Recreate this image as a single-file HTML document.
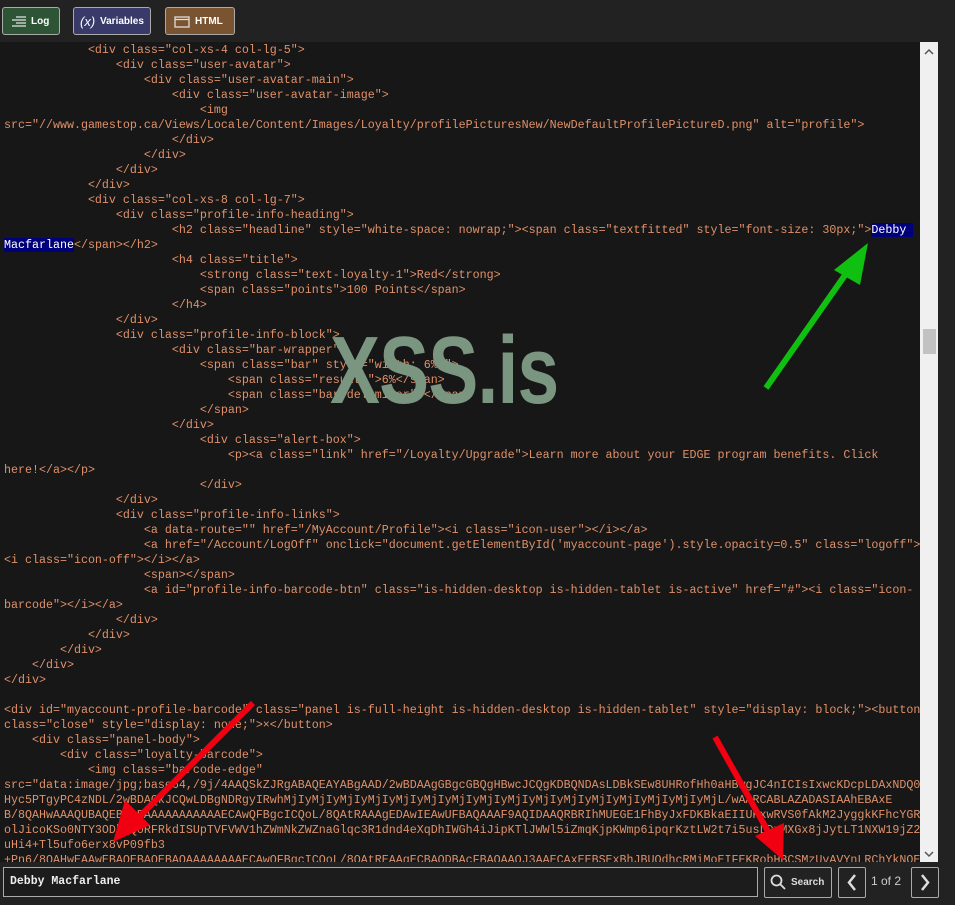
<!DOCTYPE html>
<html><head><meta charset="utf-8"><style>
html,body{margin:0;padding:0;background:#222;width:955px;height:905px;overflow:hidden;font-family:"Liberation Sans",sans-serif}
.top{position:absolute;left:0;top:0;width:955px;height:42px;background:#222}
.btn{position:absolute;top:7px;height:28px;border:1px solid #aaa;border-radius:3px;color:#fff;font-weight:bold;font-size:10px;line-height:28px;box-sizing:border-box}
.code{position:absolute;left:0;top:42px;width:920px;height:820px;background:#171717;overflow:hidden}
pre{margin:0;position:absolute;left:4px;top:1px;font-family:"Liberation Mono",monospace;font-size:11.67px;line-height:15px;color:#e0916a;white-space:pre}
.sel{background:#00007a;color:#fff}
.sb{position:absolute;left:920px;top:42px;width:18px;height:820px;background:#f0f0f0}
.wm{position:absolute;left:330px;top:274px;font-family:"Liberation Sans",sans-serif;font-weight:bold;font-size:96px;color:#7b9680;transform:scaleX(0.78);transform-origin:0 0;letter-spacing:-1px}
.bottom{position:absolute;left:0;top:862px;width:955px;height:43px;background:#222}
</style></head><body>
<div class="top">
<div class="btn" style="left:2px;width:58px;background:#2d5535;padding-left:10px">
<svg width="14" height="12" style="position:absolute;left:9px;top:8px" stroke="#ddd" stroke-width="1.3"><line x1="4" y1="1" x2="14" y2="1"/><line x1="0" y1="4" x2="14" y2="4"/><line x1="4" y1="7" x2="14" y2="7"/><line x1="0" y1="10" x2="14" y2="10"/></svg>
<span style="position:absolute;left:28px">Log</span></div>
<div class="btn" style="left:73px;width:78px;background:#3a3a6a"><span style="position:absolute;left:6px;font-style:italic;font-weight:normal;font-size:13px">(x)</span><span style="position:absolute;left:26px">Variables</span></div>
<div class="btn" style="left:165px;width:70px;background:#7a5430"><svg width="16" height="12" style="position:absolute;left:8px;top:8px" fill="none" stroke="#ddd" stroke-width="1.3"><rect x="1" y="1" width="14" height="10"/><line x1="1" y1="3.5" x2="15" y2="3.5"/></svg><span style="position:absolute;left:29px">HTML</span></div>
</div>
<div class="code"><pre>            &lt;div class="col-xs-4 col-lg-5"&gt;
                &lt;div class="user-avatar"&gt;
                    &lt;div class="user-avatar-main"&gt;
                        &lt;div class="user-avatar-image"&gt;
                            &lt;img
src="//www.gamestop.ca/Views/Locale/Content/Images/Loyalty/profilePicturesNew/NewDefaultProfilePictureD.png" alt="profile"&gt;
                        &lt;/div&gt;
                    &lt;/div&gt;
                &lt;/div&gt;
            &lt;/div&gt;
            &lt;div class="col-xs-8 col-lg-7"&gt;
                &lt;div class="profile-info-heading"&gt;
                        &lt;h2 class="headline" style="white-space: nowrap;"&gt;&lt;span class="textfitted" style="font-size: 30px;"&gt;<span class="sel">Debby </span>
<span class="sel">Macfarlane</span>&lt;/span&gt;&lt;/h2&gt;
                        &lt;h4 class="title"&gt;
                            &lt;strong class="text-loyalty-1"&gt;Red&lt;/strong&gt;
                            &lt;span class="points"&gt;100 Points&lt;/span&gt;
                        &lt;/h4&gt;
                &lt;/div&gt;
                &lt;div class="profile-info-block"&gt;
                        &lt;div class="bar-wrapper"&gt;
                            &lt;span class="bar" style="width: 6%;"&gt;
                                &lt;span class="result "&gt;6%&lt;/span&gt;
                                &lt;span class="bar-delimiter"&gt;&lt;/span&gt;
                            &lt;/span&gt;
                        &lt;/div&gt;
                            &lt;div class="alert-box"&gt;
                                &lt;p&gt;&lt;a class="link" href="/Loyalty/Upgrade"&gt;Learn more about your EDGE program benefits. Click
here!&lt;/a&gt;&lt;/p&gt;
                            &lt;/div&gt;
                &lt;/div&gt;
                &lt;div class="profile-info-links"&gt;
                    &lt;a data-route="" href="/MyAccount/Profile"&gt;&lt;i class="icon-user"&gt;&lt;/i&gt;&lt;/a&gt;
                    &lt;a href="/Account/LogOff" onclick="document.getElementById('myaccount-page').style.opacity=0.5" class="logoff"&gt;
&lt;i class="icon-off"&gt;&lt;/i&gt;&lt;/a&gt;
                    &lt;span&gt;&lt;/span&gt;
                    &lt;a id="profile-info-barcode-btn" class="is-hidden-desktop is-hidden-tablet is-active" href="#"&gt;&lt;i class="icon-
barcode"&gt;&lt;/i&gt;&lt;/a&gt;
                &lt;/div&gt;
            &lt;/div&gt;
        &lt;/div&gt;
    &lt;/div&gt;
&lt;/div&gt;

&lt;div id="myaccount-profile-barcode" class="panel is-full-height is-hidden-desktop is-hidden-tablet" style="display: block;"&gt;&lt;button
class="close" style="display: none;"&gt;×&lt;/button&gt;
    &lt;div class="panel-body"&gt;
        &lt;div class="loyalty-barcode"&gt;
            &lt;img class="barcode-edge"
src="data:image/jpg;base64,/9j/4AAQSkZJRgABAQEAYABgAAD/2wBDAAgGBgcGBQgHBwcJCQgKDBQNDAsLDBkSEw8UHRofHh0aHBwgJC4nICIsIxwcKDcpLDAxNDQ0
Hyc5PTgyPC4zNDL/2wBDAQkJCQwLDBgNDRgyIRwhMjIyMjIyMjIyMjIyMjIyMjIyMjIyMjIyMjIyMjIyMjIyMjIyMjIyMjIyMjIyMjL/wAARCABLAZADASIAAhEBAxE
B/8QAHwAAAQUBAQEBAQEAAAAAAAAAAAECAwQFBgcICQoL/8QAtRAAAgEDAwIEAwUFBAQAAAF9AQIDAAQRBRIhMUEGE1FhByJxFDKBkaEIIUKxwRVS0fAkM2JyggkKFhcYGR
olJicoKSo0NTY3ODk6Q0RFRkdISUpTVFVWV1hZWmNkZWZnaGlqc3R1dnd4eXqDhIWGh4iJipKTlJWWl5iZmqKjpKWmp6ipqrKztLW2t7i5usLDxMXGx8jJytLT1NXW19jZ2
uHi4+Tl5ufo6erx8vP09fb3
+Pn6/8QAHwEAAwEBAQEBAQEBAQAAAAAAAAECAwQFBgcICQoL/8QAtREAAgECBAQDBAcFBAQAAQJ3AAECAxEEBSExBhJBUQdhcRMiMoEIFEKRobHBCSMzUvAVYnLRChYkNOE</pre>
<div class="wm">XSS.is</div>
</div>
<div class="sb"><svg width="18" height="820" style="position:absolute;left:0;top:0"><path d="M5 12 L9 8 L13 12" fill="none" stroke="#555" stroke-width="1.5"/><rect x="3" y="287" width="13" height="25" fill="#c2c2c2"/><path d="M5 810 L9 814 L13 810" fill="none" stroke="#555" stroke-width="1.5"/></svg></div>
<svg width="955" height="905" style="position:absolute;left:0;top:0;pointer-events:none">
<g fill="#10c010" stroke="#10c010"><line x1="766" y1="388" x2="850" y2="268" stroke-width="6"/><polygon points="868,243 834,270 860,285" stroke="none"/></g>
<g fill="#f00010" stroke="#f00010"><line x1="253" y1="703" x2="136" y2="820" stroke-width="6"/><polygon points="113,842 125,800 150,825" stroke="none"/>
<line x1="715" y1="737" x2="770" y2="835" stroke-width="6"/><polygon points="783,860 755,836 784,823" stroke="none"/></g>
</svg>
<div class="bottom">
<div style="position:absolute;left:3px;top:5px;width:755px;height:30px;border:1px solid #aaa;box-sizing:border-box;background:#1c1c1c;color:#eee;font-family:'Liberation Mono',monospace;font-size:11.5px;font-weight:bold;line-height:28px;padding-left:6px">Debby Macfarlane</div>
<div style="position:absolute;left:764px;top:5px;width:68px;height:31px;border:1px solid #aaa;box-sizing:border-box;border-radius:2px;color:#ddd;font-size:10px;font-weight:bold;line-height:29px"><svg width="16" height="16" style="position:absolute;left:5px;top:6px" fill="none" stroke="#ddd" stroke-width="1.8"><circle cx="6.5" cy="6.5" r="5"/><line x1="10" y1="10" x2="15" y2="15"/></svg><span style="position:absolute;left:26px">Search</span></div>
<div style="position:absolute;left:838px;top:5px;width:28px;height:31px;border:1px solid #aaa;box-sizing:border-box;border-radius:2px"><svg width="26" height="29"><path d="M16 7 L10 14.5 L16 22" fill="none" stroke="#ddd" stroke-width="2.5"/></svg></div>
<div style="position:absolute;left:871px;top:12px;color:#ccc;font-size:12px">1 of 2</div>
<div style="position:absolute;left:911px;top:5px;width:28px;height:31px;border:1px solid #aaa;box-sizing:border-box;border-radius:2px"><svg width="26" height="29"><path d="M10 7 L16 14.5 L10 22" fill="none" stroke="#ddd" stroke-width="2.5"/></svg></div>
</div>
</body></html>
